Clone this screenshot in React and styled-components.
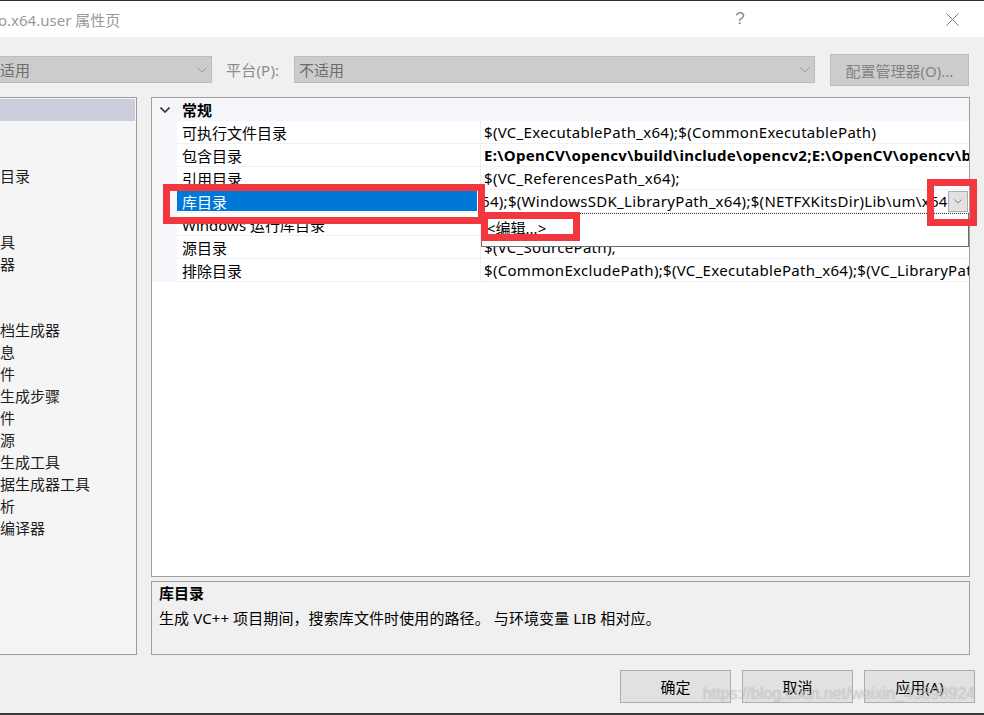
import React from 'react';
import styled, { createGlobalStyle } from 'styled-components';

const GlobalStyle = createGlobalStyle`
  html, body { margin: 0; padding: 0; background: #f0f0f0; }
  body {
    font-family: "Noto Sans", "Noto Sans CJK SC", sans-serif;
    font-size: 15px;
    color: #000;
  }
`;

const Page = styled.div`
  position: relative;
  width: 984px;
  height: 715px;
  box-sizing: border-box;
  overflow: hidden;
  background: #f0f0f0;
  border-top: 1px solid #2e2e2e;
  border-bottom: 2px solid #3a3a3a;
  display: flex;
  flex-direction: column;
`;

const TitleBar = styled.div`
  height: 36px;
  flex: none;
  background: #fff;
  display: flex;
  align-items: center;
`;

const Title = styled.div`
  flex: 1;
  margin-left: -2px;
  color: #999;
  font-size: 15px;
  white-space: nowrap;
`;

const TitleButton = styled.div`
  width: 46px;
  height: 36px;
  display: flex;
  align-items: center;
  justify-content: center;
  color: #8a8a8a;
  font-size: 17px;
  font-family: "Liberation Sans", sans-serif;
  margin-right: ${p => p.$gap || 0}px;
`;

const Toolbar = styled.div`
  height: 60px;
  flex: none;
  display: flex;
  align-items: flex-start;
  padding-top: 17px;
  box-sizing: border-box;
`;

const Combo = styled.div`
  margin-top: 2px;
  margin-left: ${p => p.$left}px;
  width: ${p => p.$width}px;
  height: 27px;
  box-sizing: border-box;
  border: 1px solid #bcbcbc;
  background: #cccccc;
  color: #6d6d6d;
  display: flex;
  align-items: center;
  padding: 0 4px 0 ${p => p.$pad}px;
  white-space: nowrap;
  span { flex: 1; }
`;

const Label = styled.div`
  margin-left: 14px;
  width: 68px;
  height: 31px;
  display: flex;
  align-items: center;
  color: #8c8c8c;
  letter-spacing: 0.2px;
`;

const GrayButton = styled.div`
  margin-left: 15px;
  width: 139px;
  height: 32px;
  box-sizing: border-box;
  border: 1px solid #bdbdbd;
  background: #cccccc;
  color: #838383;
  display: flex;
  align-items: center;
  justify-content: center;
`;

const Body = styled.div`
  height: 558px;
  flex: none;
  display: flex;
`;

const Tree = styled.div`
  margin-left: -1px;
  width: 138px;
  box-sizing: border-box;
  border: 1px solid #9a9aa0;
  background: #f5f5f5;
  padding: 1px;
`;

const TreeItem = styled.div`
  height: 22px;
  line-height: 22px;
  margin-left: -1px;
  background: ${p => (p.$selected ? '#cccedb' : 'transparent')};
  color: #1e1e1e;
  white-space: nowrap;
`;

const RightColumn = styled.div`
  margin-left: 14px;
  width: 819px;
  display: flex;
  flex-direction: column;
  gap: 4px;
`;

const Grid = styled.div`
  position: relative;
  height: 480px;
  box-sizing: border-box;
  border: 1px solid #a0a0a0;
  background: #fff;
`;

const CategoryRow = styled.div`
  height: 23px;
  display: flex;
  align-items: center;
  background: #f4f6f9;
  font-weight: 700;
  span { padding-left: 5px; }
`;

const Gutter = styled.div`
  width: 25px;
  align-self: stretch;
  flex: none;
  background: #f4f6f9;
  display: flex;
  align-items: center;
  justify-content: center;
`;

const Row = styled.div`
  position: relative;
  height: 23px;
  display: flex;
`;

const NameCell = styled.div`
  width: 304px;
  flex: none;
  box-sizing: border-box;
  padding-left: 5px;
  border-bottom: 1px solid #f0f1f4;
  border-right: 1px solid #eceef2;
  display: flex;
  align-items: center;
  white-space: nowrap;
  overflow: hidden;
  color: #000;
`;

const Highlight = styled.div`
  align-self: stretch;
  margin: 1px 3px 1px -5px;
  padding-left: 5px;
  flex: 1;
  background: #0078d7;
  color: #fff;
  display: flex;
  align-items: center;
`;

const ValueCell = styled.div`
  flex: 1;
  min-width: 0;
  box-sizing: border-box;
  padding-left: 3px;
  border-bottom: 1px solid #f0f1f4;
  display: flex;
  align-items: center;
  white-space: nowrap;
  overflow: hidden;
  letter-spacing: 0.3px;
  font-weight: ${p => (p.$bold ? 700 : 400)};
`;

const Editor = styled.div`
  flex: 1;
  min-width: 0;
  overflow: hidden;
  text-indent: -3px;
`;

const DropButton = styled.div`
  flex: none;
  width: 20px;
  height: 21px;
  margin-right: 1px;
  box-sizing: border-box;
  border: 1px solid #adadad;
  background: #e1e1e1;
  display: flex;
  align-items: center;
  justify-content: center;
`;

const DropList = styled.div`
  position: absolute;
  left: 329px;
  top: 115px;
  width: 488px;
  height: 34px;
  box-sizing: border-box;
  border: 1px solid #6e6e6e;
  border-top: 1px dotted #333;
  background: #fff;
  padding: 2px 0 0 5px;
  line-height: 24px;
`;

const Description = styled.div`
  height: 74px;
  box-sizing: border-box;
  border: 1px solid #a0a0a0;
  background: #f0f0f0;
  padding: 0 7px;
  line-height: 22px;
  strong { display: block; font-weight: 700; }
  p { margin: 3px 0 0; letter-spacing: 0.1px; }
`;

const Footer = styled.div`
  display: flex;
  justify-content: flex-end;
  gap: 11px;
  padding: 15px 9px 0 0;
`;

const DialogButton = styled.div`
  width: 111px;
  height: 33px;
  box-sizing: border-box;
  border: 1px solid #adadad;
  background: #e1e1e1;
  display: flex;
  align-items: center;
  justify-content: center;
`;

const Mark = styled.div`
  position: absolute;
  left: ${p => p.$x}px;
  top: ${p => p.$y}px;
  width: ${p => p.$w}px;
  height: ${p => p.$h}px;
  box-sizing: border-box;
  border: 7px solid #f2383e;
  pointer-events: none;
`;

const Watermark = styled.div`
  position: absolute;
  left: 703px;
  top: 684px;
  font-family: "Liberation Sans", Arial, sans-serif;
  font-size: 16px;
  color: rgba(255, 255, 255, 0.55);
  text-shadow: 0 0 1px rgba(0, 0, 0, 0.35);
  white-space: nowrap;
`;

const Chevron = ({ size = 10, color = '#9a9a9a', width = 1 }) => (
  <svg width={size} height={size / 2 + 1} viewBox="0 0 10 6">
    <polyline points="0.5,0.5 5,5 9.5,0.5" fill="none" stroke={color} strokeWidth={width} />
  </svg>
);

const CloseIcon = () => (
  <svg width="13" height="13" viewBox="0 0 13 13">
    <path d="M0.5 0.5 L12.5 12.5 M12.5 0.5 L0.5 12.5" stroke="#777" strokeWidth="1" />
  </svg>
);

const treeItems = [
  '', '', '', '目录', '', '', '具', '器', '', '', '档生成器', '息', '件',
  '生成步骤', '件', '源', '生成工具', '据生成器工具', '析', '编译器',
];

const rows = [
  { name: '可执行文件目录', value: '$(VC_ExecutablePath_x64);$(CommonExecutablePath)' },
  { name: '包含目录', value: 'E:\\OpenCV\\opencv\\build\\include\\opencv2;E:\\OpenCV\\opencv\\build\\include;E:\\OpenCV\\opencv\\build\\include\\opencv', bold: true },
  { name: '引用目录', value: '$(VC_ReferencesPath_x64);' },
  { name: '库目录', value: '64);$(WindowsSDK_LibraryPath_x64);$(NETFXKitsDir)Lib\\um\\x64', selected: true },
  { name: 'Windows 运行库目录', value: '$(WindowsSDK_MetadataPath);' },
  { name: '源目录', value: '$(VC_SourcePath);' },
  { name: '排除目录', value: '$(CommonExcludePath);$(VC_ExecutablePath_x64);$(VC_LibraryPath_x64)' },
];

export default function App() {
  return (
    <>
      <GlobalStyle />
      <Page>
        <TitleBar>
          <Title>o.x64.user 属性页</Title>
          <TitleButton $gap={166}>?</TitleButton>
          <TitleButton $gap={9}><CloseIcon /></TitleButton>
        </TitleBar>

        <Toolbar>
          <Combo $left={-22} $width={234} $pad={6}>
            <span>不适用</span>
            <Chevron />
          </Combo>
          <Label>平台(P):</Label>
          <Combo $left={0} $width={521} $pad={4}>
            <span>不适用</span>
            <Chevron />
          </Combo>
          <GrayButton>配置管理器(O)...</GrayButton>
        </Toolbar>

        <Body>
          <Tree>
            {treeItems.map((t, i) => (
              <TreeItem key={i} $selected={i === 0}>{t}</TreeItem>
            ))}
          </Tree>

          <RightColumn>
            <Grid>
              <CategoryRow>
                <Gutter><Chevron color="#333" width={1.6} size={10} /></Gutter>
                <span>常规</span>
              </CategoryRow>
              {rows.map(r => (
                <Row key={r.name}>
                  <Gutter />
                  <NameCell>
                    {r.selected ? <Highlight>{r.name}</Highlight> : r.name}
                  </NameCell>
                  <ValueCell $bold={r.bold}>
                    {r.selected ? (
                      <>
                        <Editor>{r.value}</Editor>
                        <DropButton><Chevron size={8} color="#666" /></DropButton>
                      </>
                    ) : (
                      r.value
                    )}
                  </ValueCell>
                </Row>
              ))}
              <DropList>&lt;编辑...&gt;</DropList>
            </Grid>

            <Description>
              <strong>库目录</strong>
              <p>生成 VC++ 项目期间，搜索库文件时使用的路径。 与环境变量 LIB 相对应。</p>
            </Description>
          </RightColumn>
        </Body>

        <Footer>
          <DialogButton>确定</DialogButton>
          <DialogButton>取消</DialogButton>
          <DialogButton>应用(A)</DialogButton>
        </Footer>

        <Mark $x={163} $y={183} $w={322} $h={40} />
        <Mark $x={481} $y={211} $w={99} $h={29} />
        <Mark $x={927} $y={178} $w={50} $h={47} />
        <Watermark>https://blog.csdn.net/weixin_43898924</Watermark>
      </Page>
    </>
  );
}
